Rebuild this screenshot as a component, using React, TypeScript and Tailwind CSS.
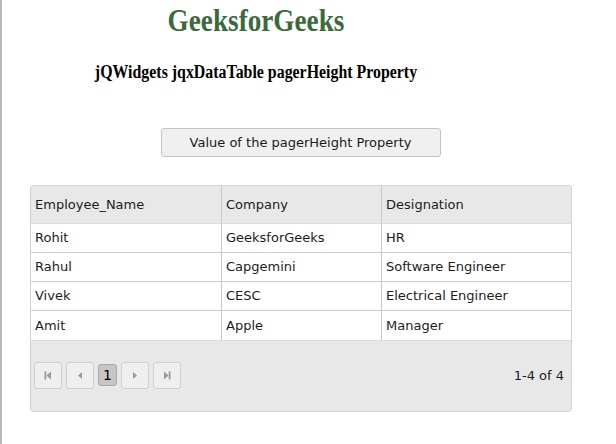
const rows = [
  ['Rohit', 'GeeksforGeeks', 'HR'],
  ['Rahul', 'Capgemini', 'Software Engineer'],
  ['Vivek', 'CESC', 'Electrical Engineer'],
  ['Amit', 'Apple', 'Manager'],
];

const cols = ['Employee_Name', 'Company', 'Designation'];
const widths = ['w-[191px]', 'w-[160px]', 'flex-1'];

function PagerBtn({ children }: { children: React.ReactNode }) {
  return (
    <div className="w-[28px] h-[27px] rounded-[3px] border border-[#cfcfcf] bg-[#efefef] flex items-center justify-center">
      {children}
    </div>
  );
}

export default function App() {
  return (
    <div className="w-[616px] h-[444px] bg-white border-l-2 border-[#b8b8b8] font-['DejaVu_Sans',sans-serif] text-[#1c1c1c]">
      <div className="w-[508px] text-center font-['Liberation_Serif',serif] font-bold">
        <h1 className="pt-[1px] text-[32px] leading-[38px] text-[#3b6a3b] scale-x-[0.85]">GeeksforGeeks</h1>
        <h3 className="mt-[22px] text-[18.7px] leading-[22px] text-black scale-x-[0.85]">
          jQWidgets jqxDataTable pagerHeight Property
        </h3>
      </div>

      <div className="ml-[28px] w-[541px] flex justify-center mt-[45px]">
        <button className="w-[280px] h-[29px] rounded-[3px] border border-[#c4c4c4] bg-[#f0f0f0] text-[13px] text-[#1a1a1a]">
          Value of the pagerHeight Property
        </button>
      </div>

      <div className="ml-[28px] mt-[28px] w-[542px] border border-[#d2d2d2] rounded-[3px] overflow-hidden text-[13px]">
        <div className="flex h-[38px] bg-[#e8e8e8] border-b border-[#dcdcdc]">
          {cols.map((c, i) => (
            <div
              key={c}
              className={`${widths[i]} flex items-center pl-[4px] ${i < 2 ? 'border-r border-[#c8c8c8]' : ''}`}
            >
              {c}
            </div>
          ))}
        </div>
        {rows.map((r, ri) => (
          <div key={ri} className={`flex h-[29px] bg-white ${ri < 3 ? 'border-b border-[#cccccc]' : ''}`}>
            {r.map((v, i) => (
              <div
                key={i}
                className={`${widths[i]} flex items-center pl-[4px] ${i < 2 ? 'border-r border-[#c8c8c8]' : ''}`}
              >
                {v}
              </div>
            ))}
          </div>
        ))}
        <div className="h-[71px] bg-[#e8e8e8] border-t border-[#dcdcdc] flex items-center justify-between pl-[3px] pr-[7px]">
          <div className="flex items-center gap-[4px] mb-[2px]">
            <PagerBtn>
              <svg width="8" height="9" viewBox="0 0 8 9" fill="#9a9a9a">
                <rect x="0.5" y="0.5" width="1.8" height="8" />
                <path d="M7 0.5v8L2.5 4.5z" />
              </svg>
            </PagerBtn>
            <PagerBtn>
              <svg width="8" height="9" viewBox="0 0 8 9" fill="#9a9a9a">
                <path d="M6 1v7L2 4.5z" />
              </svg>
            </PagerBtn>
            <div className="w-[19px] h-[22px] rounded-[3px] border border-[#a8a8a8] bg-[#c6c6c6] flex items-center justify-center text-[14px] text-black">
              1
            </div>
            <PagerBtn>
              <svg width="8" height="9" viewBox="0 0 8 9" fill="#9a9a9a">
                <path d="M2 1v7L6 4.5z" />
              </svg>
            </PagerBtn>
            <PagerBtn>
              <svg width="8" height="9" viewBox="0 0 8 9" fill="#9a9a9a">
                <path d="M1 0.5v8L5.5 4.5z" />
                <rect x="5.7" y="0.5" width="1.8" height="8" />
              </svg>
            </PagerBtn>
          </div>
          <span className="text-[13px]">1-4 of 4</span>
        </div>
      </div>
    </div>
  );
}
